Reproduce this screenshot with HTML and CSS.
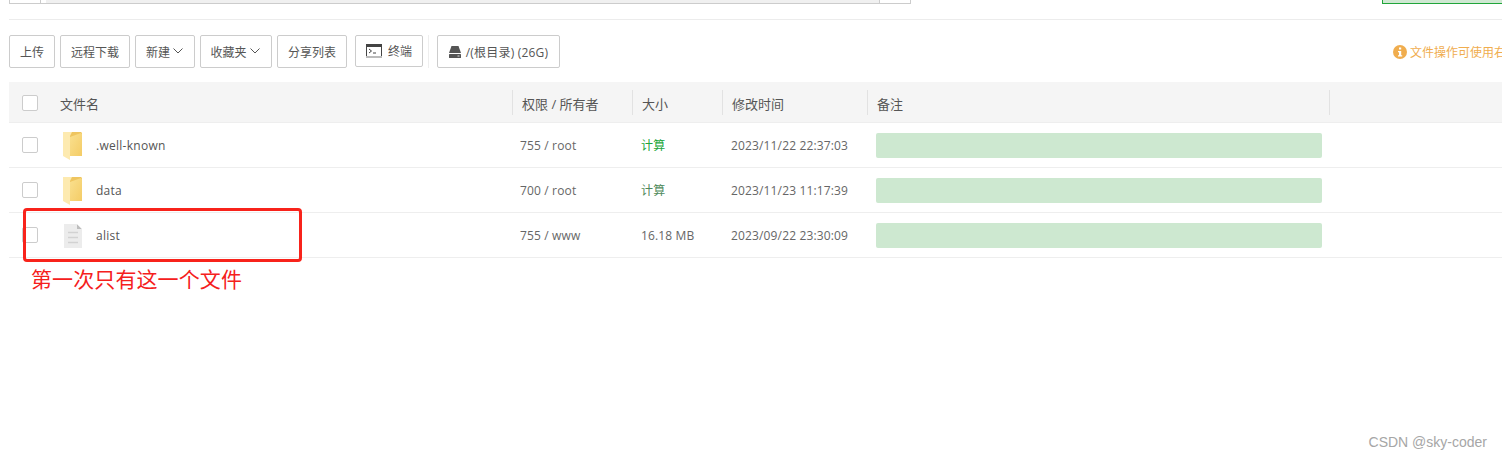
FILE: index.html
```html
<!DOCTYPE html>
<html lang="zh">
<head>
<meta charset="utf-8">
<title>文件管理</title>
<link rel="stylesheet" href="styles.css">
</head>
<body>
<div class="page">
  <div class="topbar">
    <div class="pathbar"><span class="path-a"></span><span class="path-b"></span><span class="path-c"></span></div>
    <div class="green-box"></div>
  </div>
  <div class="toolbar">
    <button class="btn b-up">上传</button>
    <button class="btn b-dl">远程下载</button>
    <button class="btn b-new">新建<svg class="chev" viewBox="0 0 10 6"><path d="M.5.5 5 5 9.500.5" fill="none" stroke="#555" stroke-width="1"/></svg></button>
    <button class="btn b-fav">收藏夹<svg class="chev" viewBox="0 0 10 6"><path d="M.5.5 5 5 9.500.5" fill="none" stroke="#555" stroke-width="1"/></svg></button>
    <button class="btn b-share">分享列表</button>
    <button class="btn b-term"><svg class="term" viewBox="0 0 16 14"><rect x=".5" y=".5" width="15" height="13" fill="#fff" stroke="#444"/><rect x="0" y="0" width="16" height="3" fill="#444"/><rect x="0" y="12" width="16" height="2" fill="#bbb"/><path d="M3 5l2.500 2L3 9M7 9h3" fill="none" stroke="#444" stroke-width="1"/></svg>终端</button>
    <span class="sep"></span>
    <button class="btn b-disk"><svg class="disk" viewBox="0 0 12 12"><path d="M2.500 0h7L12 7H0z" fill="#555"/><rect y="8" width="12" height="4" rx=".5" fill="#555"/><rect x="8.500" y="9.500" width="2" height="1" fill="#ddd"/></svg>/(根目录) (26G)</button>
    <div class="tip"><svg class="info" viewBox="0 0 14 14"><circle cx="7" cy="7" r="7" fill="#f0ad4e"/><rect x="6" y="2.500" width="2.200" height="2" fill="#fff"/><path d="M5 6h3.200v4.200H9.200v1.300H5v-1.300h1V7.300H5z" fill="#fff"/></svg>文件操作可使用右</div>
  </div>
  <div class="table">
    <div class="row head">
      <div class="c-name"><span class="check"></span><span class="head-label">文件名</span></div>
      <div class="c-perm">权限 / 所有者</div>
      <div class="c-size">大小</div>
      <div class="c-time">修改时间</div>
      <div class="c-note">备注</div>
      <div class="c-rest"></div>
    </div>
    <div class="row">
      <div class="c-name"><span class="check"></span>
        <svg class="ficon" viewBox="0 0 20 28"><use href="#folder"/></svg><span class="fname">.well-known</span></div>
      <div class="c-perm">755 / root</div>
      <div class="c-size calc">计算</div>
      <div class="c-time">2023/11/22 22:37:03</div>
      <div class="c-note"><span class="note-bar"></span></div>
      <div class="c-rest"></div>
    </div>
    <div class="row">
      <div class="c-name"><span class="check"></span>
        <svg class="ficon" viewBox="0 0 20 28"><use href="#folder"/></svg><span class="fname">data</span></div>
      <div class="c-perm">700 / root</div>
      <div class="c-size calc dim">计算</div>
      <div class="c-time">2023/11/23 11:17:39</div>
      <div class="c-note"><span class="note-bar"></span></div>
      <div class="c-rest"></div>
    </div>
    <div class="row">
      <div class="c-name"><span class="check"></span>
        <svg class="ficon" viewBox="-1 -2 20 28"><rect x="1" y="1" width="18" height="24" fill="#ececec"/><path d="M14 1l5 5h-5z" fill="#bdbdbd"/><path d="M14 1h5v5z" fill="#fff"/><path d="M5 9.500h10M5 14.500h10M5 19.500h10" stroke="#d2d2d2" stroke-width="1.500"/></svg><span class="fname">alist</span></div>
      <div class="c-perm">755 / www</div>
      <div class="c-size">16.18 MB</div>
      <div class="c-time">2023/09/22 23:30:09</div>
      <div class="c-note"><span class="note-bar"></span></div>
      <div class="c-rest"></div>
    </div>
  </div>
  <div class="red-box"></div>
  <div class="red-text">第一次只有这一个文件</div>
  <div class="mark">CSDN @sky-coder</div>
</div>
<svg class="defs" width="0" height="0"><defs>
  <linearGradient id="fg" x1="0" x2="1" y1="0" y2="1"><stop offset="0" stop-color="#fae08f"/><stop offset="1" stop-color="#f4cc66"/></linearGradient>
  <symbol id="folder" viewBox="0 0 20 28" overflow="visible"><path d="M1 1h18l1 1v23H7z" fill="#efc55f"/><path d="M8 6l11-4 1 1v22H8z" fill="url(#fg)"/><path d="M1 1h9l-2 4v24l-7-4z" fill="#fdeab0"/></symbol>
</defs></svg>
</body>
</html>
```
FILE: styles.css
```css
* { box-sizing: border-box; }
html, body { margin: 0; padding: 0; background: #fff; }
body { font-family: "Open Sans", "Noto Sans CJK SC", sans-serif; font-size: 12px; color: #666; overflow: hidden; }
.page { position: relative; width: 1502px; height: 459px; overflow: hidden; padding-left: 9px; }
.topbar { display: flex; justify-content: space-between; height: 20px; border-bottom: 1px solid #ececec; }
.pathbar { display: flex; width: 902px; height: 4px; border: 1px solid #ccc; border-top: 0; background: #f0f0f0; }
.path-a { width: 31px; background: #fff; border-right: 1px solid #ccc; }
.path-b { width: 5px; background: #fff; }
.path-c { flex: 1; }
.pathbar::after { content: ""; width: 30px; background: #fff; border-left: 1px solid #ccc; }
.green-box { width: 120px; height: 4px; background: #cfe8d2; border: 1px solid #20a53a; border-top: 0; border-right: 0; }
.toolbar { display: flex; align-items: flex-start; height: 62px; padding-top: 15px; }
.btn { flex: none; display: flex; align-items: center; justify-content: center; height: 33px; padding: 0; margin: 0 5px 0 0; background: #fff; border: 1px solid #ccc; border-radius: 2px; color: #555; font: inherit; font-size: 12px; white-space: nowrap; }
.b-up { width: 46px; }
.b-dl { width: 70px; }
.b-new { width: 60px; padding-right: 1px; }
.b-fav { width: 72px; padding-right: 2px; }
.b-share { width: 70px; margin-right: 8px; }
.b-term { width: 68px; height: 32px; margin-right: 5px; }
.b-disk { width: 123px; margin-left: 8px; letter-spacing: .2px; }
.sep { flex: none; width: 1px; height: 33px; background: #eee; }
.chev { width: 10px; height: 6px; margin: -2px 0 0 3px; }
.term { width: 16px; height: 14px; margin-right: 6px; }
.disk { width: 12px; height: 12px; margin-right: 5px; }
.tip { flex: none; display: flex; align-items: center; margin-left: 828px; height: 33px; color: #f0ad4e; white-space: nowrap; }
.info { flex: none; width: 14px; height: 14px; margin-right: 3px; }
.row { display: flex; height: 45px; border-bottom: 1px solid #eee; align-items: center; width: 1493px; letter-spacing: .15px; }
.head { height: 41px; background: #f5f5f5; color: #555; font-size: 13px; letter-spacing: 0; }
.row > div { height: 100%; display: flex; align-items: center; flex: none; }
.head > div { height: 25px; border-right: 1px solid #e2e2e2; padding-top: 2px; }
.c-name { width: 504px; }
.c-perm { width: 120px; padding-left: 7px; }
.c-size { width: 90px; padding-left: 8px; }
.c-time { width: 145px; padding-left: 8px; }
.c-note { width: 462px; padding-left: 8px; }
.head .c-perm { padding-left: 9px; }
.head .c-size { padding-left: 9px; }
.head .c-time { padding-left: 9px; }
.head .c-note { padding-left: 9px; }
.row > .c-rest { flex: 1; border-right: 0; }
.check { flex: none; width: 16px; height: 16px; margin-left: 13px; background: #fff; border: 1px solid #ccc; border-radius: 2px; }
.head .check { margin-top: -1px; }
.head-label { margin-left: 22px; }
.ficon { flex: none; width: 20px; height: 28px; margin-left: 24px; overflow: visible; }
.fname { margin-left: 14px; color: #555; letter-spacing: .27px; }
.calc { color: #20a53a; }
.dim { color: #4f8a5b; }
.note-bar { display: block; width: 446px; height: 25px; background: #cde8d0; border-radius: 2px; }
.red-box { position: absolute; left: 23px; top: 208px; width: 279px; height: 54px; border: 3px solid #f8231b; border-radius: 4px; }
.red-text { position: absolute; left: 31px; top: 263px; font-size: 21px; letter-spacing: .1px; line-height: 30px; color: #f5201c; font-family: "Noto Sans CJK SC", sans-serif; white-space: nowrap; }
.mark { position: absolute; right: 15px; top: 433px; font-family: "Liberation Sans", sans-serif; font-size: 14px; line-height: 18px; color: #a6a6a6; }
.defs { position: absolute; }
```
